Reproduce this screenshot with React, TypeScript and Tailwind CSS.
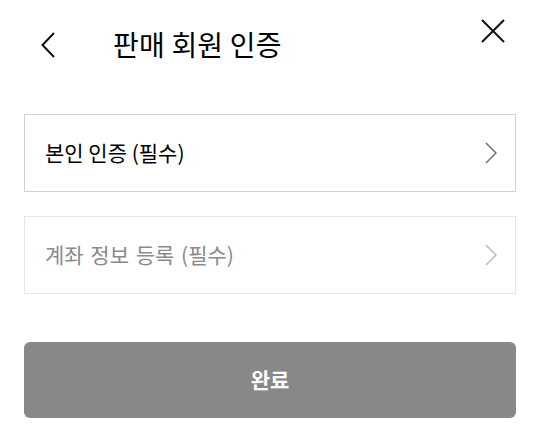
export default function App() {
  return (
    <div
      className="w-[540px] h-[446px] bg-white px-6 text-black"
      style={{ fontFamily: '"Noto Sans CJK KR", "Noto Sans", sans-serif' }}
    >
      {/* Header */}
      <header className="flex items-start h-[114px]">
        <button className="mt-[32px] ml-[17px] shrink-0">
          <svg width="14" height="26" viewBox="0 0 14 26" fill="none">
            <path d="M13 1L1.5 13L13 25" stroke="#111" strokeWidth="2" />
          </svg>
        </button>
        <h1 className="ml-[58px] mt-[25px] text-[28px] leading-[38px] font-normal tracking-[0.2px]">
          판매 회원 인증
        </h1>
        <button className="ml-auto mt-[19px] mr-[11px] shrink-0">
          <svg width="24" height="24" viewBox="0 0 24 24" fill="none">
            <path d="M1 1L23 23M23 1L1 23" stroke="#111" strokeWidth="2" />
          </svg>
        </button>
      </header>

      {/* Steps */}
      <div className="flex flex-col gap-[24px]">
        <button className="flex h-[78px] items-center justify-between border border-[#d2d2d2] pl-5 pr-[18px]">
          <span className="text-[21px] text-black">본인 인증 (필수)</span>
          <svg width="12" height="22" viewBox="0 0 12 22" fill="none">
            <path d="M1 1L11 11L1 21" stroke="#707070" strokeWidth="1.5" />
          </svg>
        </button>
        <button className="flex h-[78px] items-center justify-between border border-[#e6e6e6] pl-5 pr-[18px]">
          <span className="text-[21px] text-[#8a8a8a] [word-spacing:2px]">계좌 정보 등록 (필수)</span>
          <svg width="12" height="22" viewBox="0 0 12 22" fill="none">
            <path d="M1 1L11 11L1 21" stroke="#bdbdbd" strokeWidth="1.5" />
          </svg>
        </button>
      </div>

      <button className="mt-[48px] flex h-[76px] w-full items-center justify-center rounded-md bg-[#888888] text-[21px] font-bold text-white">
        완료
      </button>
    </div>
  );
}
